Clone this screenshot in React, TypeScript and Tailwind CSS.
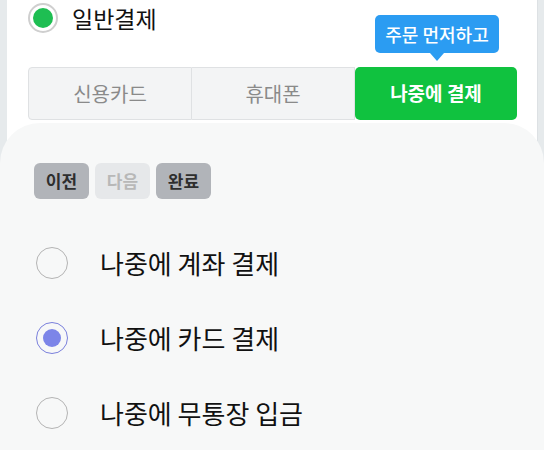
import React from "react";

const font = { fontFamily: '"Noto Sans CJK KR", "Noto Sans", sans-serif' };

function Radio({ selected }: { selected?: boolean }) {
  return selected ? (
    <div className="w-[32px] h-[32px] rounded-full border-[1.5px] border-[#7a80dc] flex items-center justify-center">
      <div className="w-[18px] h-[18px] rounded-full bg-[#7c85e8]" />
    </div>
  ) : (
    <div className="w-[32px] h-[32px] rounded-full border-[1.5px] border-[#b4b4b4]" />
  );
}

export default function App() {
  const options = [
    { label: "나중에 계좌 결제", selected: false },
    { label: "나중에 카드 결제", selected: true },
    { label: "나중에 무통장 입금", selected: false },
  ];
  return (
    <div className="w-[544px] h-[450px] overflow-hidden bg-white" style={font}>
      <div className="flex h-[165px]">
        <div className="w-[7px] bg-[#e6eaec]" />
        <div className="flex-1 bg-white pl-[21px] pr-[20px]">
          <div className="flex items-center h-[36px]">
            <div className="w-[30px] h-[30px] rounded-full border-2 border-[#cfcfcf] bg-white flex items-center justify-center">
              <div className="w-[20px] h-[20px] rounded-full bg-[#1ebe52]" />
            </div>
            <span className="ml-[14px] text-[23px] text-[#111] leading-none">일반결제</span>
          </div>
          <div className="relative mt-[31px] flex h-[53px]">
            <div className="flex-1 flex items-center justify-center bg-[#f3f4f5] border border-[#dfe1e3] rounded-l-[4px] text-[20px] text-[#8a8a8a]">
              신용카드
            </div>
            <div className="flex-1 flex items-center justify-center bg-[#f3f4f5] border-y border-r border-[#dfe1e3] text-[20px] text-[#8a8a8a]">
              휴대폰
            </div>
            <div className="relative flex-1 flex items-center justify-center bg-[#10c23f] rounded-[5px] text-[19px] font-bold text-white">
              나중에 결제
              <div className="absolute left-[20px] top-[-52px] flex flex-col items-center font-medium">
                <div className="w-[124px] h-[38px] rounded-[5px] bg-[#2b9cf2] flex items-center justify-center text-[18px] text-white">
                  주문 먼저하고
                </div>
                <div className="w-0 h-0 border-l-[7px] border-r-[7px] border-t-[8px] border-l-transparent border-r-transparent border-t-[#2b9cf2]" />
              </div>
            </div>
          </div>
        </div>
        <div className="w-[7px] bg-[#e6eaec] border-l border-[#dde1e4]" />
      </div>
      <div className="relative -mt-[42px] h-[400px] rounded-t-[40px] bg-[#f7f8f8] pt-[40px] pl-[34px]">
        <div className="flex gap-[6px]">
          <div className="w-[55px] h-[36px] rounded-[6px] bg-[#b1b4b9] flex items-center justify-center text-[17px] font-bold text-[#2e2e2e]">
            이전
          </div>
          <div className="w-[55px] h-[36px] rounded-[6px] bg-[#e6e8ea] flex items-center justify-center text-[17px] font-bold text-[#b8b8b8]">
            다음
          </div>
          <div className="w-[55px] h-[36px] rounded-[6px] bg-[#b1b4b9] flex items-center justify-center text-[17px] font-bold text-[#2e2e2e]">
            완료
          </div>
        </div>
        <div className="mt-[26px] flex flex-col">
          {options.map((o) => (
            <div key={o.label} className="flex items-center h-[75px] pl-[2px]">
              <Radio selected={o.selected} />
              <span className="ml-[32px] text-[26px] leading-none text-[#111]">{o.label}</span>
            </div>
          ))}
        </div>
      </div>
    </div>
  );
}
